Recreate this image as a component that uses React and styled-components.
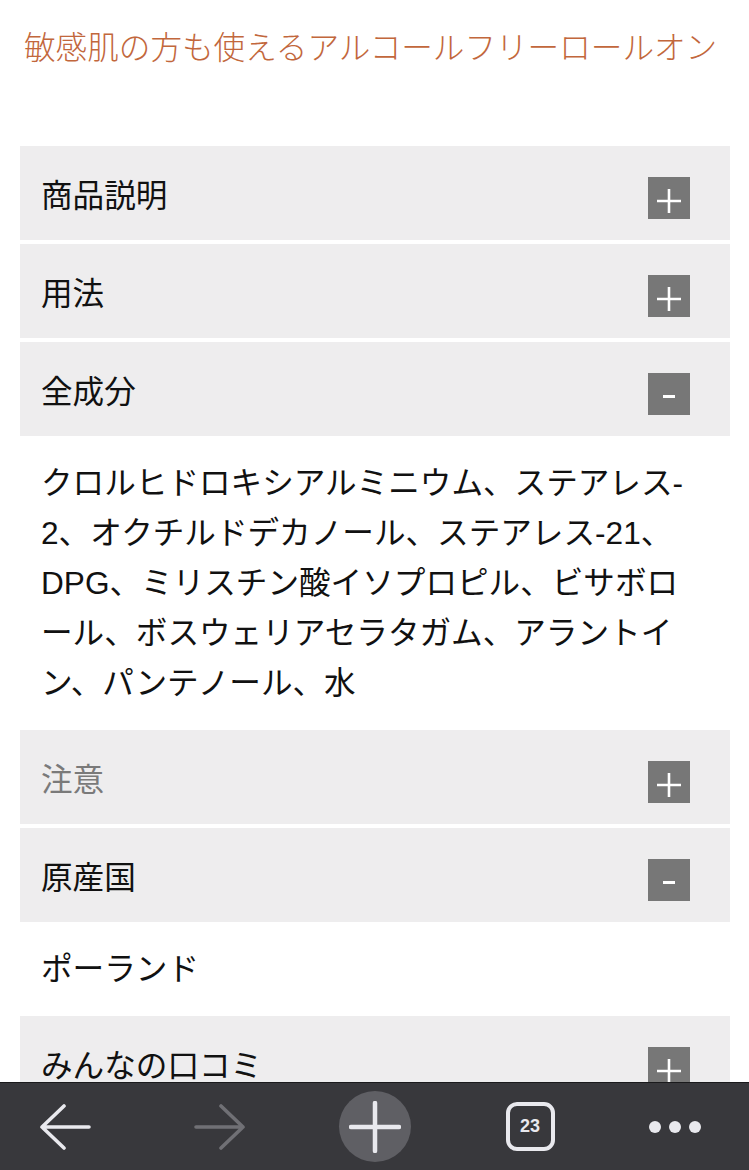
import styled, { createGlobalStyle } from 'styled-components';

const GlobalStyle = createGlobalStyle`
  html, body {
    margin: 0;
    padding: 0;
    background: #ffffff;
  }
  body {
    font-family: 'Liberation Sans', 'Noto Sans CJK JP', sans-serif;
    color: #111111;
  }
`;

const Page = styled.div`
  padding: 23px 0 120px;
`;

const Title = styled.h1`
  margin: 0 0 73px;
  padding: 0 12px 0 24px;
  font-size: 31.6px;
  line-height: 50px;
  font-weight: 300;
  color: #c2673c;
  white-space: nowrap;
`;

const Accordion = styled.div`
  display: flex;
  flex-direction: column;
  gap: 4px;
  margin: 0 19px 0 20px;
`;

const Header = styled.div`
  display: flex;
  align-items: center;
  justify-content: space-between;
  box-sizing: border-box;
  height: 94px;
  padding: 0 40px 0 21px;
  background: #eeedee;
  font-size: 31.6px;
  color: ${(p) => (p.$muted ? '#7a7a7a' : '#111111')};
`;

const Toggle = styled.span`
  display: flex;
  align-items: center;
  justify-content: center;
  width: 42px;
  height: 42px;
  margin-top: 9px;
  background: #777777;
`;

const Body = styled.div`
  padding: 18px 30px 18px 21px;
  font-size: 31.6px;
  line-height: 50px;
  line-break: loose;
  color: #111111;
`;

const BottomBar = styled.nav`
  position: fixed;
  left: 0;
  right: 0;
  bottom: 0;
  height: 88px;
  display: grid;
  grid-template-columns: 130px 180px 130px 180px 109px;
  align-items: center;
  justify-items: center;
  background: #38383c;
  border-top: 1px solid #1a1a1c;
  box-sizing: border-box;
`;

const NavButton = styled.span`
  display: flex;
  align-items: center;
  justify-content: center;
`;

const NewTab = styled.span`
  display: flex;
  align-items: center;
  justify-content: center;
  width: 72px;
  height: 71px;
  border-radius: 50%;
  background: #5f5f64;
`;

const TabCount = styled.span`
  display: flex;
  align-items: center;
  justify-content: center;
  box-sizing: border-box;
  width: 49px;
  height: 49px;
  border: 4px solid #e9e9ee;
  border-radius: 11px;
  font-family: 'Liberation Sans', sans-serif;
  font-weight: 700;
  font-size: 18px;
  color: #e9e9ee;
`;

const Dots = styled.span`
  display: flex;
  gap: 8px;
`;

const Dot = styled.span`
  width: 12px;
  height: 12px;
  border-radius: 50%;
  background: #e9e9ee;
`;

function ToggleIcon({ open }) {
  return (
    <Toggle>
      <svg width='42' height='42' viewBox='0 0 42 42'>
        {open ? (
          <path d='M15 23.5 H27' stroke='#fff' strokeWidth='3' />
        ) : (
          <path d='M9 24 H33 M21 12 V36' stroke='#fff' strokeWidth='2.6' />
        )}
      </svg>
    </Toggle>
  );
}

function Section({ title, open, muted, children }) {
  return (
    <>
      <Header $muted={muted}>
        <span>{title}</span>
        <ToggleIcon open={open} />
      </Header>
      {open && <Body>{children}</Body>}
    </>
  );
}

function Arrow({ color, flip }) {
  return (
    <svg
      width='52'
      height='46'
      viewBox='0 0 52 46'
      style={flip ? { transform: 'scaleX(-1)' } : undefined}
    >
      <path
        d='M50 23 H3 M25 2 L3 23 L25 44'
        fill='none'
        stroke={color}
        strokeWidth='3.6'
        strokeLinecap='round'
        strokeLinejoin='round'
      />
    </svg>
  );
}

export default function App() {
  return (
    <>
      <GlobalStyle />
      <Page>
        <Title>敏感肌の方も使えるアルコールフリーロールオン</Title>
        <Accordion>
          <Section title='商品説明' />
          <Section title='用法' />
          <Section title='全成分' open>
            クロルヒドロキシアルミニウム、ステアレス-<wbr />2、オクチルドデカノール、ステアレス-21、<wbr />DPG、ミリスチン酸イソプロピル、ビサボロ<wbr />ール、ボスウェリアセラタガム、アラントイ<wbr />ン、パンテノール、水
          </Section>
          <Section title='注意' muted />
          <Section title='原産国' open>
            ポーランド
          </Section>
          <Section title='みんなの口コミ' />
        </Accordion>
      </Page>
      <BottomBar>
        <NavButton>
          <Arrow color='#e9e9ee' />
        </NavButton>
        <NavButton>
          <Arrow color='#707075' flip />
        </NavButton>
        <NewTab>
          <svg width='52' height='52' viewBox='0 0 52 52'>
            <path
              d='M26 2 V50 M2 26 H50'
              stroke='#e9e9ee'
              strokeWidth='4.5'
              strokeLinecap='round'
            />
          </svg>
        </NewTab>
        <TabCount>23</TabCount>
        <Dots>
          <Dot />
          <Dot />
          <Dot />
        </Dots>
      </BottomBar>
    </>
  );
}
